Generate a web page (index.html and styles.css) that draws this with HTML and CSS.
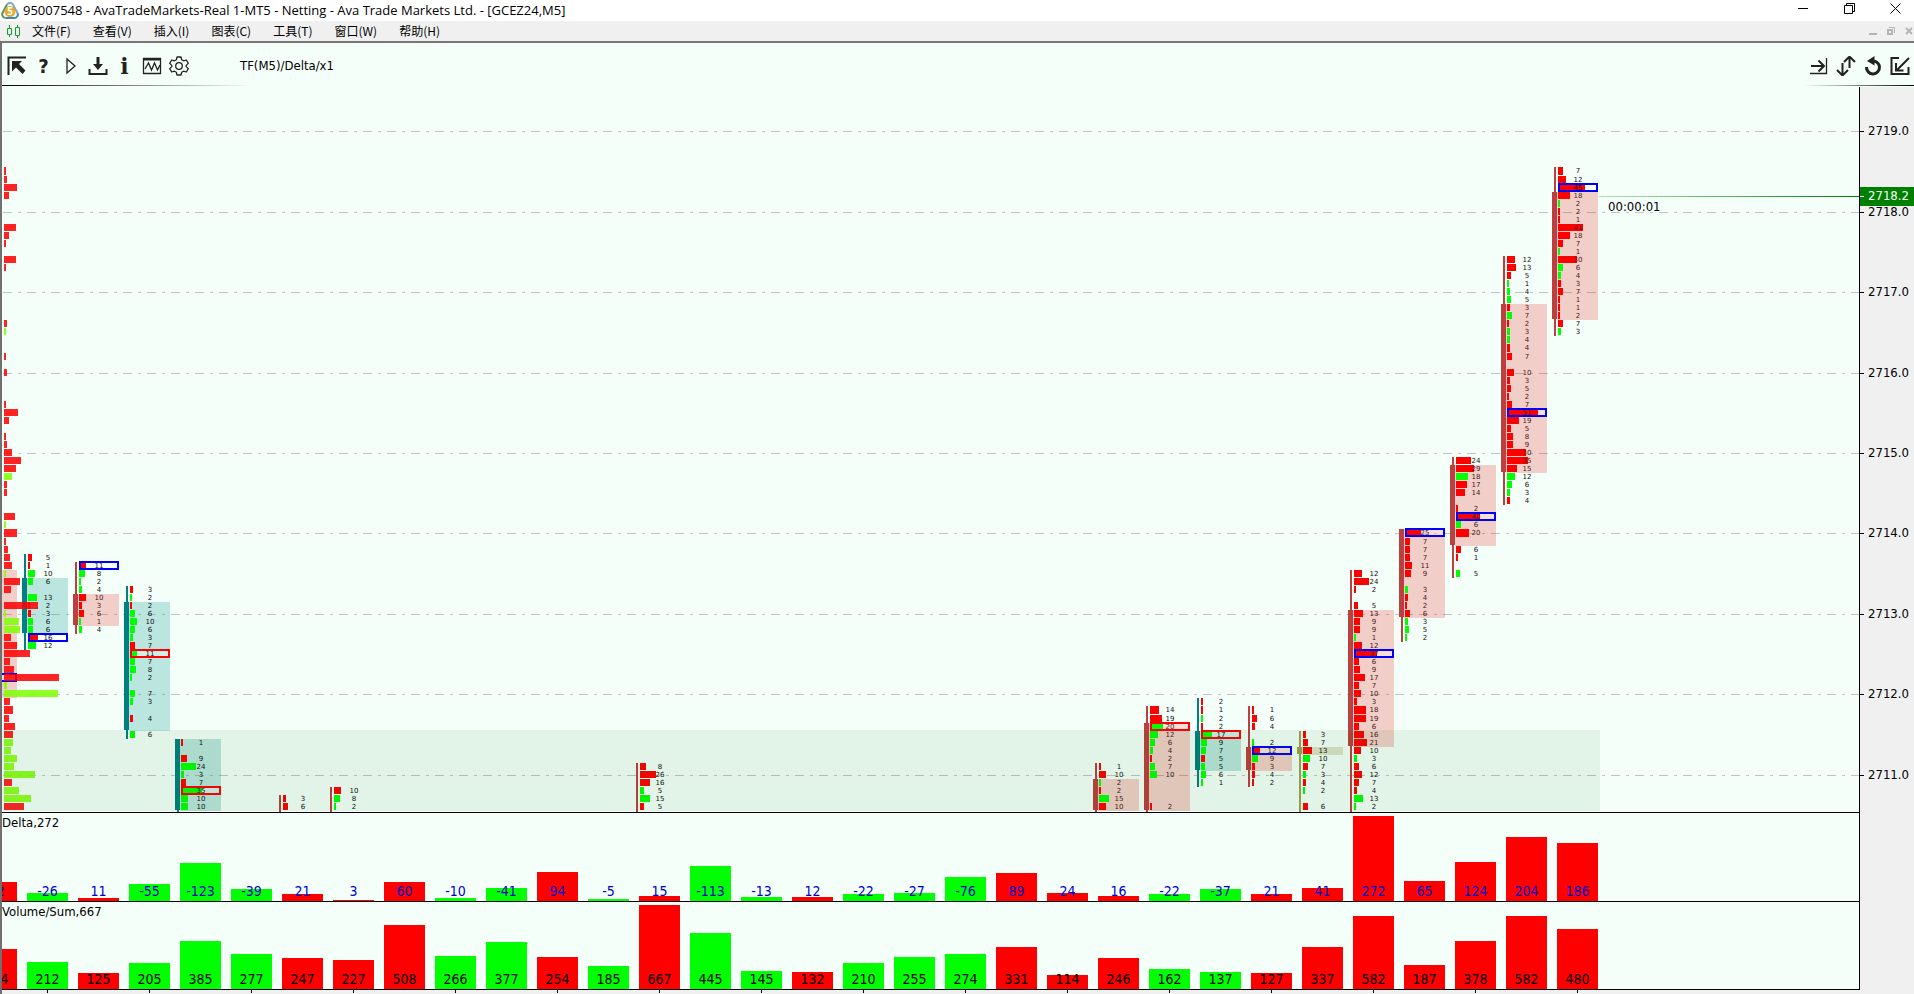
FILE: index.html
```html
<!DOCTYPE html>
<html lang="zh-CN">
<head>
<meta charset="utf-8">
<title>95007548 - AvaTradeMarkets-Real 1-MT5</title>
<link rel="stylesheet" href="styles.css">
</head>
<body>
<header class="titlebar">
  <svg class="logo" viewBox="0 0 18 18" aria-hidden="true">
    <path d="M6 2.500A3.600 3.600 0 0 1 12 2.500L16.500 11" fill="none" stroke="#7fa8c4" stroke-width="2"/>
    <path d="M6 2.500L1.500 11A3.600 3.600 0 0 0 4.500 16" fill="none" stroke="#4d9a52" stroke-width="2"/>
    <path d="M4.500 16H13.500A3.500 3.500 0 0 0 16.500 11" fill="none" stroke="#3f86b8" stroke-width="2"/>
    <circle cx="9" cy="9.500" r="5.500" fill="#e5a92b"/>
    <text x="9" y="13" text-anchor="middle" class="logo-digit">5</text>
  </svg>
  <h1 class="title">95007548 - AvaTradeMarkets-Real 1-MT5 - Netting - Ava Trade Markets Ltd. - [GCEZ24,M5]</h1>
  <div class="window-buttons">
    <button type="button" aria-label="Minimize"><svg width="11" height="11"><path d="M0 5.500H10" /></svg></button>
    <button type="button" aria-label="Restore"><svg width="11" height="11"><path d="M.5 2.500H8.500V10.500H.5ZM2.500 2V.5H10.500V8.500H9"/></svg></button>
    <button type="button" aria-label="Close"><svg width="11" height="11"><path d="M.5 .5L10.500 10.500M10.500 .5L.5 10.500"/></svg></button>
  </div>
</header>
<nav class="menubar">
  <svg class="candles" width="13" height="13" aria-hidden="true"><path d="M2.500 0V3M2.500 9V12M.5 3.500H4.500V9.500H.5ZM10.500 0V2M10.500 10V13M8.500 2.500H12.500V10.500H8.500Z"/></svg>
  <div class="menu-items">
    <a href="#">文件(F)</a><a href="#">查看(V)</a><a href="#">插入(I)</a><a href="#">图表(C)</a><a href="#">工具(T)</a><a href="#">窗口(W)</a><a href="#">帮助(H)</a>
  </div>
  <div class="child-buttons">
    <button type="button" aria-label="Minimize chart"><svg width="8" height="8"><path d="M0 7H8"/></svg></button>
    <button type="button" aria-label="Restore chart"><svg width="8" height="8"><path d="M1 3H5V7H1Z"/><path class="thin" d="M2 .5H7.500V6"/></svg></button>
    <button type="button" aria-label="Close chart"><svg width="8" height="8"><path d="M1 1L7 7M7 1L1 7"/></svg></button>
  </div>
</nav>
<main class="window">
  <div class="toolbar">
    <div class="tools">
      <button type="button" aria-label="Collapse"><svg viewBox="0 0 20 20"><path d="M1.500 19V1.500H19" class="s2"/><path d="M5 5H15L12 8L18.500 14.500L15.500 18L9 11.500L5 15.500Z" fill="#222"/></svg></button>
      <button type="button" aria-label="Help"><span class="glyph">?</span></button>
      <button type="button" aria-label="Play"><svg viewBox="0 0 20 20"><path d="M6 3V17L14 10Z" class="s1"/></svg></button>
      <button type="button" aria-label="Download"><svg viewBox="0 0 20 20"><path d="M10 1V10" class="s3"/><path d="M5 8H15L10 14Z" fill="#222"/><path d="M1.500 13V18H18.500V13" class="s2"/></svg></button>
      <button type="button" aria-label="Information"><span class="glyph serif">i</span></button>
      <button type="button" aria-label="Indicators"><svg viewBox="0 0 20 20"><path d="M1.500 2.500H18.500V17.500H1.500Z" class="s1"/><path d="M1.500 3.500H18.500" class="s2"/><path d="M3 13L6.500 7L9.500 14L12.500 7L15.500 14L18 9" class="s1"/></svg></button>
      <button type="button" aria-label="Settings"><svg viewBox="0 0 20 20"><path d="M8 1H12L12.700 3.800L14.500 4.800L17.300 4L19.300 7.400L17.200 9.400V10.600L19.300 12.600L17.300 16L14.500 15.200L12.700 16.200L12 19H8L7.300 16.200L5.500 15.200L2.700 16L.7 12.600L2.800 10.600V9.400L.7 7.400L2.700 4L5.500 4.800L7.300 3.800Z" class="s1" stroke-linejoin="round"/><circle cx="10" cy="10" r="3.300" class="s1"/></svg></button>
    </div>
    <p class="mode">TF(M5)/Delta/x1</p>
    <div class="tools">
      <button type="button" aria-label="Scroll to end"><svg viewBox="0 0 20 20"><path d="M17.500 2V17.500H1" class="s1"/><path d="M2 10H15M9.500 4.500L15 10L9.500 15.500" class="s2"/></svg></button>
      <button type="button" aria-label="Vertical scale"><svg viewBox="0 0 20 20"><path d="M13.500 0V12M8 6L13.500 .5L19 6M6.500 7V20M1 14L6.500 19.500L12 14" class="s2"/></svg></button>
      <button type="button" aria-label="Reset"><svg viewBox="0 0 20 20"><path d="M9 5A6.500 6.500 0 1 1 3.500 11" class="s3"/><path d="M4 5L11.500 0V9.500Z" fill="#222"/></svg></button>
      <button type="button" aria-label="Dock"><svg viewBox="0 0 20 20"><path d="M9 2H1.500V18H18.500V11" class="s2"/><path d="M19 2L7 14M6 7V14.500H13.500" class="s2"/></svg></button>
    </div>
  </div>
  <div class="workspace">
    <div class="panes">
      <svg class="price-pane" id="price" role="img" aria-label="GCEZ24 M5"></svg>
      <section class="pane delta"><h2>Delta,272</h2><div class="bars" id="delta"></div></section>
      <section class="pane volume"><h2>Volume/Sum,667</h2><div class="bars" id="volume"></div></section>
    </div>
    <svg class="axis" id="axis" role="img" aria-label="Price"></svg>
  </div>
  <div class="timeline" id="timeline"></div>
</main>
<script src="chart.js"></script>
</body>
</html>
```
FILE: styles.css
```css
* { box-sizing: border-box; }
body {
  margin: 0;
  height: 100vh;
  display: flex;
  flex-direction: column;
  overflow: hidden;
  background: #fff;
  color: #000;
  font-family: "DejaVu Sans Condensed", "DejaVu Sans", "Noto Sans CJK SC", sans-serif;
  font-size: 13px;
}
h1, h2, p { margin: 0; font-weight: normal; }
button {
  border: 0;
  padding: 0;
  background: none;
  display: flex;
  align-items: center;
  justify-content: center;
}
.titlebar {
  height: 21px;
  flex: none;
  display: flex;
  align-items: center;
  padding-left: 1px;
  gap: 4px;
}
.logo { width: 18px; height: 18px; }
.logo-digit { font: bold 10px "Open Sans", sans-serif; fill: #fff; }
.title {
  flex: 1;
  font: 13px/18px "Open Sans", "Noto Sans", sans-serif;
  padding-bottom: 2px;
  white-space: nowrap;
}
.window-buttons { display: flex; gap: 8px; padding-bottom: 5px; }
.window-buttons button { width: 38px; height: 16px; }
.window-buttons path { fill: none; stroke: #000; }
.menubar {
  height: 20px;
  flex: none;
  display: flex;
  align-items: center;
  background: #f0f0f0;
  padding-left: 7px;
  gap: 12px;
}
.candles path { fill: none; stroke: #11a02c; }
.menu-items { flex: 1; display: flex; gap: 22px; }
.menu-items a {
  color: #000;
  text-decoration: none;
  font: 12px/18px "Noto Sans CJK SC", sans-serif;
}
.child-buttons { display: flex; gap: 8px; }
.child-buttons button { width: 10px; height: 16px; }
.child-buttons path { fill: none; stroke: #b4b4b4; stroke-width: 2; }
.child-buttons .thin { stroke-width: 1; }
.window {
  flex: 1;
  min-height: 0;
  display: flex;
  flex-direction: column;
  border-left: 2px solid #707070;
  border-top: 2px solid #777;
  background: #f5fffa;
}
.toolbar {
  height: 44px;
  flex: none;
  display: flex;
  align-items: center;
  padding: 1px 1px 0 1px;
  background:
    linear-gradient(90deg, #000, #f5fffa) left 0 bottom 1px / 250px 1px no-repeat,
    linear-gradient(270deg, #000, #f5fffa) right 0 bottom 1px / 110px 1px no-repeat;
}
.tools { display: flex; }
.tools button { width: 27px; height: 24px; }
.tools svg { width: 20px; height: 20px; }
.tools .s1, .tools .s2, .tools .s3 { fill: none; stroke: #222; stroke-width: 1.3; }
.tools .s2 { stroke-width: 2; }
.tools .s3 { stroke-width: 3; }
.glyph { font: bold 20px/24px "DejaVu Sans Condensed", sans-serif; color: #222; }
.glyph.serif { font: bold 22px/24px "DejaVu Serif", serif; }
.mode { flex: 1; padding-left: 48px; }
.workspace { flex: 1; min-height: 0; display: flex; }
.panes { flex: 1; min-width: 0; display: flex; flex-direction: column; }
.price-pane { display: block; width: 100%; flex: 1; min-height: 0; overflow: hidden; }
.pane {
  display: grid;
  flex: none;
  overflow: hidden;
  border-top: 1px solid #000;
}
.pane h2 { grid-area: 1 / 1; align-self: start; font-size: 13px; line-height: 17px; padding-top: 1px; z-index: 1; }
.delta { height: 89px; }
.volume { height: 89px; border-bottom: 1px solid #000; }
.bars {
  grid-area: 1 / 1;
  display: flex;
  gap: 10px;
  margin-left: -26px;
}
.col { width: 41px; flex: none; display: grid; align-items: end; }
.col > * { grid-area: 1 / 1; }
.fill { background: #f00; }
.fill.g { background: #0f0; }
.col span { text-align: center; font-size: 14px; line-height: 16px; padding-bottom: 2px; }
.delta span { color: #0000cd; }
.axis { width: 55px; flex: none; background: #f0f0f0; border-left: 1px solid #000; height: 100%; }
.axis .tag { fill: #008000; }
.axis .tag-text { fill: #fff; }
.timeline {
  height: 4px;
  flex: none;
  display: flex;
  gap: 101px;
  padding-left: 45px;
  background: #f0f0f0;
}
.timeline i { width: 1px; height: 3px; background: #000; flex: none; }
.grid { stroke: #c4c4c4; stroke-dasharray: 9 6 3 6; }
.cell { font: 7px "DejaVu Sans", sans-serif; text-anchor: middle; fill: #111; }
.in-body { fill: #4a2020; }
.r { fill: #f00; }
.g { fill: #0f0; }
.profile-r { fill: rgba(255, 0, 0, .86); }
.profile-g { fill: rgba(127, 255, 0, .86); }
.wick-down { fill: #bc4040; }
.wick-up { fill: #008080; }
.wick-flat { fill: #a0a050; }
.shade-down { fill: rgba(230, 10, 0, .2); }
.shade-up { fill: rgba(0, 150, 136, .24); }
.shade-flat { fill: rgba(130, 110, 0, .2); }
.box-bg { fill: rgba(255, 255, 255, .35); }
.box { fill: none; stroke-width: 2; }
.box.blue { stroke: #00f; }
.box.red { stroke: #f00; }
.zone { fill: rgba(0, 100, 0, .075); }
```
FILE: chart.js
```js
const NS = "http://www.w3.org/2000/svg";
const LAST_X = 1556;
const PITCH = 51;

// Tick 0 is 2719.0; each tick is 0.1 lower.
const rowTop = n => 40 + 8 * n + [6, 28, 51, 73].filter(k => n >= k).length;
const rowHeight = n => rowTop(n + 1) - rowTop(n) - 1;

function add(parent, name, attrs, text) {
  const el = document.createElementNS(NS, name);
  for (const key in attrs) el.setAttribute(key, attrs[key]);
  if (text !== undefined) el.textContent = text;
  parent.appendChild(el);
  return el;
}
const rect = (p, x, y, width, height, cls) => add(p, "rect", { x, y, width, height, class: cls });

// col: columns back from the newest; body: first and last tick of the candle body.
// Cells: value + colour, then b or x for a blue or red outline; "_" is empty.
const candles = [
  { col: 0, dir: "down", start: 5, body: [8, 23], cells: "7r 12r 45rb 18r 2g 2r 1r 41r 18r 7r 1g 30r 6g 4g 3r 7r 1r 1r 2r 7r 3g" },
  { col: 1, dir: "down", start: 16, body: [22, 42], cells: "12r 13r 5r 1g 4g 5g 3r 7g 2r 3g 4g 4r 7r _ 10r 3r 5r 2r 7r 51rb 19r 5r 8r 9r 30r 35r 15r 12g 6g 3g 4r" },
  { col: 2, dir: "down", start: 41, body: [42, 51], cells: "24r 29r 18g 17r 14r _ 2r 40rb 6g 20r _ 6r 1r _ 5g" },
  { col: 3, dir: "down", start: 50, body: [50, 60], cells: "25rb 7r 7r 7r 11r 9r _ 3g 4r 2r 6r 3g 5g 2g" },
  { col: 4, dir: "down", start: 55, body: [60, 76], cells: "12r 24r 2r _ 5r 13r 9r 9r 1g 12r 37rb 6r 9r 17r 7r 10r 3r 18r 19r 6r 16r 21r 10r 3g 6r 12r 7r 4r 13g 2g" },
  { col: 5, dir: "flat", start: 75, body: [77, 77], cells: "3r 7r 13r 10g 7r 3g 4r 2g _ 6r" },
  { col: 6, dir: "down", start: 72, body: [77, 79], cells: "1r 6r 4r _ 2g 12rb 9g 3r 4r 2r" },
  { col: 7, dir: "up", start: 71, body: [75, 79], cells: "2r 1r 2g 2r 17gx 9g 7g 5r 5g 6g 1g" },
  { col: 8, dir: "down", start: 72, body: [74, 84], cells: "14r 19r 20gx 12g 6g 4g 2r 7g 10g _ _ _ 2r" },
  { col: 9, dir: "down", start: 79, body: [81, 84], cells: "1r 10r 2g 2r 15g 10r" },
  { col: 18, dir: "down", start: 79, cells: "8r 26r 16r 5g 15g 5r" },
  { col: 24, dir: "down", start: 82, cells: "10r 8g 2g" },
  { col: 25, dir: "down", start: 83, cells: "3r 6r" },
  { col: 27, dir: "up", start: 76, body: [76, 84], cells: "1r _ 9r 24g 3g 7r 35gx 10g 10g" },
  { col: 28, dir: "up", start: 57, body: [59, 74], cells: "3r 2g 2r 6g 10g 6g 3g 7r 11gx 7g 8g 2g _ 7g 3g _ 4r _ 6g" },
  { col: 29, dir: "down", start: 54, body: [58, 61], cells: "11rb 8g 2g 4g 10r 3r 6r 1g 4g" },
  { col: 30, dir: "up", start: 53, body: [56, 62], cells: "5r 1r 10g 6g _ 13g 2r 3r 6g 6g 16rb 12g" },
  { col: 31, dir: "down", start: 68, body: [55, 70], cells: "40rb" }
];

// Volume profile at the left edge: tick, length and colour.
const profile = "5 2r,6 3r,7 13r,8 5r,12 12r,13 5r,14 2r,16 12r,17 2r,24 3r,25 2g,28 2r,30 3r,34 2r,35 14r,36 5r,38 2r,39 3r,40 8r,41 17r,42 12r,43 8g,44 3r,45 3r,48 11r,49 2g,50 13r,51 2r,52 4r,53 6r,54 8r,55 2g,56 16r,57 7r,59 34r,60 2g,61 15g,62 16g,63 7r,64 13r,65 26r,66 6r,67 10r,68 55r,69 3g,70 54g,71 6r,72 9r,73 5r,74 11r,75 9r,76 9g,77 7g,78 13g,79 10g,80 31g,81 8r,82 15g,83 27g,84 20r";

const price = document.getElementById("price");
const axis = document.getElementById("axis");

for (let i = 0; i <= 8; i++) {
  const y = rowTop(i * 10) + 4;
  add(price, "line", { x1: 1, x2: "100%", y1: y + .5, y2: y + .5, class: "grid" });
  rect(axis, 0, y, 4, 1, "");
  add(axis, "text", { x: 8, y: y + 4 }, (2719 - i).toFixed(1));
}

for (const c of candles) {
  const x = LAST_X - PITCH * c.col;
  const cells = c.cells.split(" ");
  const last = c.start + cells.length - 1;
  const top = rowTop(c.start);
  const g = add(price, "g", {});
  rect(g, x - 4, top, 2, rowTop(last + 1) - top + (last >= 84 ? 2 : 0), "wick-" + c.dir);
  if (c.body) {
    const y = rowTop(c.body[0]);
    const h = rowTop(c.body[1] + 1) - y;
    rect(g, x - 6, y, 5, h - 1, "wick-" + c.dir);
    rect(g, x - 1, y, 41, h, "shade-" + c.dir);
  }
  cells.forEach((cell, i) => {
    if (cell === "_") return;
    const [, value, colour, mark] = cell.match(/(\d+)([rg])([bx]?)/);
    const n = c.start + i;
    const y = rowTop(n);
    if (mark) rect(g, x, y - 1, 40, 9, "box-bg");
    rect(g, x, y, Math.round(.585 * value + 1), rowHeight(n), colour);
    const inside = c.body && n >= c.body[0] && n <= c.body[1];
    if (x > 0) add(g, "text", { x: x + 20, y: y + 6, class: "cell" + (inside && c.dir === "down" ? " in-body" : "") }, value);
    if (mark) rect(g, x + 1, y, 38, 7, "box " + (mark === "b" ? "blue" : "red"));
  });
}

for (const item of profile.split(",")) {
  const [n, len] = item.split(" ");
  rect(price, 2, rowTop(+n), parseInt(len), rowHeight(+n), "profile-" + len.slice(-1));
}
rect(price, 0, rowTop(75) - 1, LAST_X + 42, rowTop(85) - rowTop(75) + 1, "zone");

// Current price.
const now = rowTop(8) + 4;
const fade = add(add(price, "defs", {}), "linearGradient", { id: "fade" });
add(fade, "stop", { offset: 0, "stop-color": "#b4e4b8" });
add(fade, "stop", { offset: 1, "stop-color": "#008000" });
add(price, "rect", { x: LAST_X + 41, y: now, width: 260, height: 1, fill: "url(#fade)" });
add(price, "text", { x: LAST_X + 50, y: now + 15 }, "00:00:01");
rect(axis, 0, now - 9, 55, 19, "tag");
add(axis, "rect", { x: 0, y: now, width: 4, height: 1, fill: "#fff" });
add(axis, "text", { x: 8, y: now + 4, class: "tag-text" }, "2718.2");

const delta = [62, -26, 11, -55, -123, -39, 21, 3, 60, -10, -41, 94, -5, 15, -113, -13, 12, -22, -27, -76, 89, 24, 16, -22, -37, 21, 41, 272, 65, 124, 204, 186];
const volume = [314, 212, 125, 205, 385, 277, 247, 227, 508, 266, 377, 254, 185, 667, 445, 145, 132, 210, 255, 274, 331, 114, 246, 162, 137, 127, 337, 582, 187, 378, 582, 480];

function drawBars(id, values, full) {
  const max = Math.max(...values);
  document.getElementById(id).innerHTML = values.map((v, i) =>
    `<div class="col"><div class="fill${delta[i] < 0 ? " g" : ""}" style="height:${Math.round(Math.abs(v) / max * full)}px"></div><span>${v}</span></div>`
  ).join("");
}
drawBars("delta", delta, 85);
drawBars("volume", volume, 84);
document.getElementById("timeline").innerHTML = "<i></i>".repeat(16);
```
